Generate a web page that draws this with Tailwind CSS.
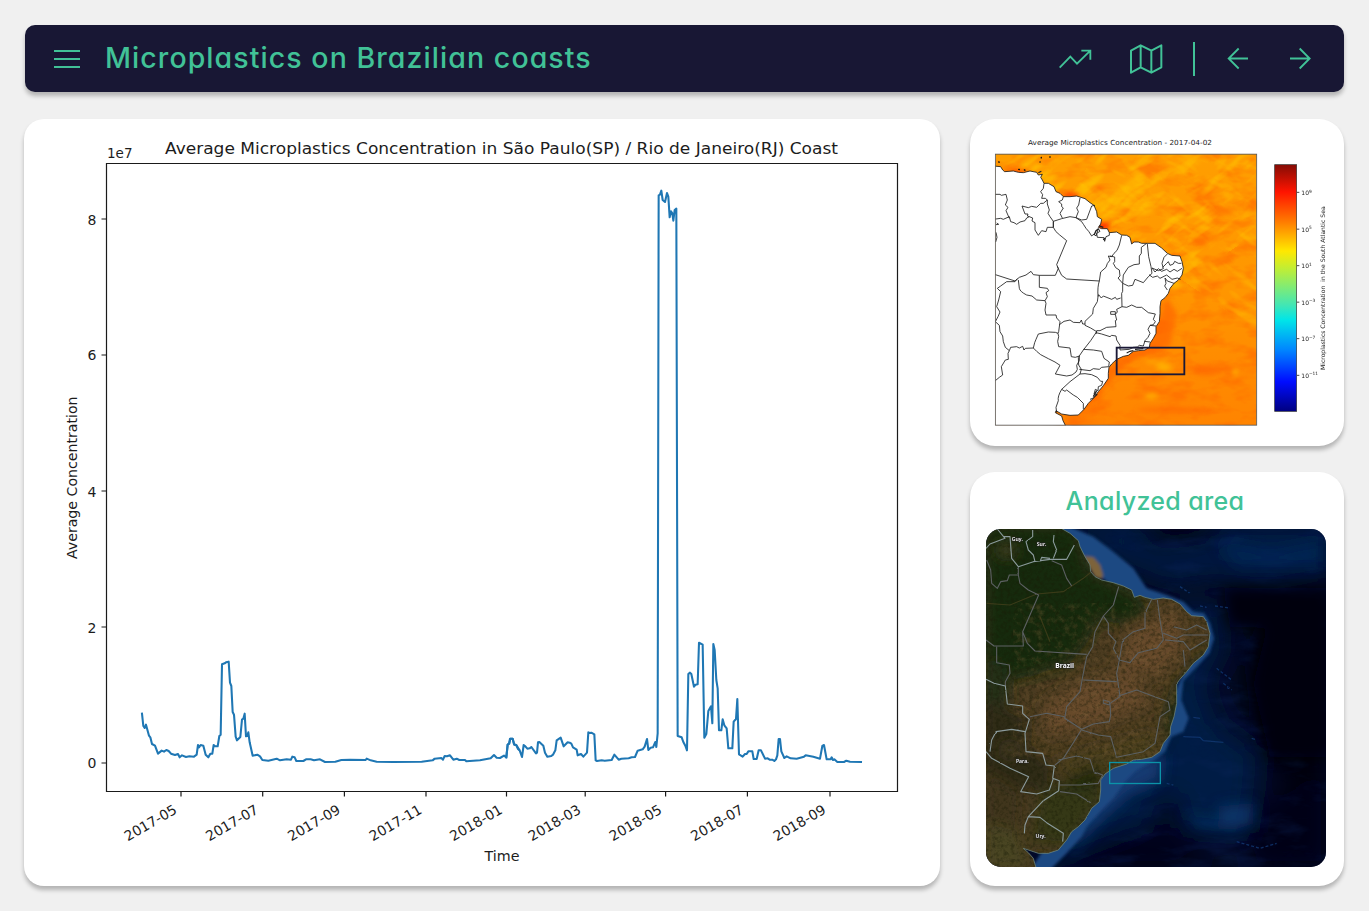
<!DOCTYPE html>
<html lang="en">
<head>
<meta charset="utf-8">
<title>Microplastics on Brazilian coasts</title>
<script src="https://cdn.jsdelivr.net/npm/@tailwindcss/browser@4"></script>
</head>
<body class="bg-[#f0f0f0] w-[1369px] h-[911px] overflow-hidden">
<div class="flex flex-col h-full pt-[25px] pl-6 pr-[25px] pb-[25px] gap-[27px]">
  <header class="ml-px h-[67px] shrink-0 rounded-[10px] bg-[#181734] shadow-[0_4px_4px_rgba(0,0,0,0.25)] flex items-center pl-[29px] pr-8 text-[#41c297]">
    <svg class="w-[26px] h-5 shrink-0" viewBox="0 0 26 20" fill="none" stroke="currentColor" stroke-width="2"><path d="M0 2H26M0 10H26M0 18H26"/></svg>
    <h1 class="ml-[25px] font-['Inter',sans-serif] font-medium text-[28.5px] leading-none tracking-[1.07px] whitespace-nowrap [font-feature-settings:'cv11','calt'_0]">Microplastics on Brazilian coasts</h1>
    <svg class="ml-auto w-[34px] h-[34px]" viewBox="84 66 102 102" fill="none" stroke="currentColor" stroke-width="5.500"><path d="M89 143L121 110L141 131L181 92M154 92H181V119"/></svg>
    <svg class="ml-[37px] w-[34px] h-[34px]" viewBox="297 66 102 102" fill="none" stroke="currentColor" stroke-width="6" stroke-linejoin="round"><path d="M303 92L332 76L364 92L394 76V142L364 158L332 142L303 158ZM332 76V142M364 92V158"/></svg>
    <div class="ml-[30px] w-0.5 h-[34px] bg-current"></div>
    <svg class="ml-8 w-[23px] h-[23px]" viewBox="591 82.500 69 69" fill="none" stroke="currentColor" stroke-width="5.500"><path d="M654 117H596M626 87L596 117L626 147"/></svg>
    <svg class="ml-[39px] w-[23px] h-[23px]" viewBox="777 82.500 69 69" fill="none" stroke="currentColor" stroke-width="5.500"><path d="M780 117H839M809 87L839 117L809 147"/></svg>
  </header>

  <main class="flex gap-[30px] flex-1 min-h-0">
    <section class="w-[916px] h-[767px] shrink-0 rounded-[20px] bg-white shadow-[0_4px_4px_rgba(0,0,0,0.25)]">
      <svg class="w-[916px] h-[767px] font-['DejaVu_Sans',sans-serif]" viewBox="24 119 916 767" fill="#1c1c1c">
        <text x="165" y="154" font-size="16.700" textLength="673" lengthAdjust="spacingAndGlyphs">Average Microplastics Concentration in São Paulo(SP) / Rio de Janeiro(RJ) Coast</text>
        <text x="107" y="158" font-size="13.800" textLength="25.500" lengthAdjust="spacingAndGlyphs">1e7</text>
        <g font-size="14" text-anchor="end">
          <text x="96.500" y="768">0</text><text x="96.500" y="632.500">2</text><text x="96.500" y="496.500">4</text><text x="96.500" y="360">6</text><text x="96.500" y="224.500">8</text>
        </g>
        <path d="M106.500 163.500H897.500V791.500H106.500ZM101.500 763H106.500M101.500 627H106.500M101.500 491H106.500M101.500 355H106.500M101.500 219H106.500M181 791.500V796.500M262.700 791.500V796.500M344.400 791.500V796.500M426 791.500V796.500M506.500 791.500V796.500M585.200 791.500V796.500M665.600 791.500V796.500M747.400 791.500V796.500M830 791.500V796.500" fill="none" stroke="#1a1a1a" stroke-width="1.200"/>
        <g font-size="13.900" text-anchor="end">
          <text transform="translate(178 812.500) rotate(-30)">2017-05</text>
          <text transform="translate(259.500 812.500) rotate(-30)">2017-07</text>
          <text transform="translate(341.500 812.500) rotate(-30)">2017-09</text>
          <text transform="translate(423 812.500) rotate(-30)">2017-11</text>
          <text transform="translate(503.500 812.500) rotate(-30)">2018-01</text>
          <text transform="translate(582 812.500) rotate(-30)">2018-03</text>
          <text transform="translate(663 812.500) rotate(-30)">2018-05</text>
          <text transform="translate(744.500 812.500) rotate(-30)">2018-07</text>
          <text transform="translate(827 812.500) rotate(-30)">2018-09</text>
        </g>
        <text x="502" y="861" font-size="13.900" text-anchor="middle" textLength="35" lengthAdjust="spacingAndGlyphs">Time</text>
        <text transform="translate(77 559) rotate(-90)" font-size="13.900" textLength="162.500" lengthAdjust="spacingAndGlyphs">Average Concentration</text>
        <g fill="none" stroke="#1f77b4" stroke-width="6.200" stroke-linejoin="round" stroke-linecap="square">
          <path transform="translate(100 640) scale(.33333)" d="M126 221L130 258L134 264L138 254L147 287L151 292L156 312L165 317L174 341L185 332L192 335L199 330L206 333L213 341L225 345L234 342L239 352L246 346L258 351L268 349L282 350L290 344L294 315L297 322L302 315L310 317L317 344L325 352L331 341L337 341L341 315L345 319L353 319L358 288L362 284L366 73L374 70L378 67L386 65L390 128L394 138L398 216L402 224L407 290L411 301L421 291L426 239L430 236L434 221L438 289L442 288L445 277L449 307L458 347L472 344L480 349L487 360L505 362L530 356L540 361L560 358L573 359L577 350L584 352L589 363L610 363L618 358L632 358L642 361L660 358L675 366L706 365L724 360L750 359L797 360L800 356L812 361L830 365L880 366L965 365L998 361L1004 356L1024 354L1029 359L1034 348L1041 349L1050 346L1060 359L1070 356L1078 360L1095 360L1099 364L1140 361L1172 355L1182 345L1190 353L1200 354L1212 347L1219 352L1223 314L1227 311L1230 296L1238 296L1242 313L1249 315L1257 328"/>
          <path transform="translate(480 640) scale(.33333)" d="M79 352L83 314L88 311L91 296L98 296L103 314L109 316L114 327L119 331L126 351L131 315L136 319L142 326L149 325L154 321L168 340L171 338L174 307L178 306L190 317L195 338L202 350L214 348L219 344L226 331L230 301L242 293L251 319L263 307L269 308L274 311L279 322L290 329L293 346L303 342L310 350L321 338L325 277L329 279L334 278L343 283L347 361L351 363L365 361L374 362L395 360L403 344L416 359L424 356L446 355L455 352L465 351L473 332L488 328L494 320L501 297L505 330L512 323L519 322L526 306L529 321L533 280L536 -1334L540 -1336L544 -1348L548 -1320L555 -1314L561 -1341L565 -1330L569 -1268L573 -1286L577 -1280L580 -1258L584 -1290L589 -1294L593 288L605 292L610 306L616 317L621 331L625 102L630 98L634 102L642 140L647 134L653 133L657 8L668 14L673 293L679 282L685 213L693 199L697 250L700 12L704 30L709 120L713 145L717 271L724 271L728 238L733 256L740 265L745 325L757 325L761 245L768 237L772 177L777 343L788 350L795 342L800 342L805 334L817 334L821 357L830 357L836 331L843 331L855 356L863 355L869 359L877 359L883 363L888 358L892 346L896 297L900 297L904 334L913 354L920 349L932 355L950 356L972 350L977 346L1000 350L1020 356L1027 318L1032 315L1040 358L1052 358L1055 352L1059 360L1063 358L1072 366L1092 366L1099 362L1110 365L1143 366"/>
        </g>
      </svg>
    </section>

    <div class="flex flex-col gap-[26px] w-[374px]">
      <section class="h-[327px] rounded-[25px] bg-white shadow-[0_4px_4px_rgba(0,0,0,0.25)]">
        <svg class="w-[374px] h-[327px] font-['DejaVu_Sans',sans-serif]" viewBox="0 -3 1122 981" fill="#1c1c1c">
          <defs>
            <clipPath id="frame"><rect x="76" y="102" width="784" height="814"/></clipPath>
            <linearGradient id="jet" x1="0" y1="0" x2="0" y2="1">
              <stop offset="0" stop-color="#850c05"/><stop offset=".11" stop-color="#ff1400"/><stop offset=".23" stop-color="#ff7a00"/><stop offset=".35" stop-color="#ffe800"/><stop offset=".42" stop-color="#c2ee33"/><stop offset=".5" stop-color="#7deb78"/><stop offset=".57" stop-color="#41e6b5"/><stop offset=".63" stop-color="#00e5e8"/><stop offset=".75" stop-color="#0086ff"/><stop offset=".88" stop-color="#000cff"/><stop offset="1" stop-color="#000080"/>
            </linearGradient>
            <linearGradient id="sea" x1="0" y1="0" x2="0" y2="1"><stop offset="0" stop-color="#ff9e00"/><stop offset=".5" stop-color="#ff9600"/><stop offset=".75" stop-color="#ff8c00"/><stop offset="1" stop-color="#ff8400"/></linearGradient>
            <filter id="streak" x="0" y="0" width="100%" height="100%" color-interpolation-filters="sRGB"><feTurbulence type="fractalNoise" baseFrequency=".010 .035" numOctaves="2" seed="4"/><feColorMatrix values="0 0 0 0 1  0 0 0 0 .86  0 0 0 0 0  4 0 0 0 -2.050"/></filter>
            <filter id="cross" x="0" y="0" width="100%" height="100%" color-interpolation-filters="sRGB"><feTurbulence type="fractalNoise" baseFrequency=".010 .035" numOctaves="2" seed="17"/><feColorMatrix values="0 0 0 0 1  0 0 0 0 .82  0 0 0 0 0  4 0 0 0 -2.100"/></filter>
            <filter id="warm" x="0" y="0" width="100%" height="100%" color-interpolation-filters="sRGB"><feTurbulence type="fractalNoise" baseFrequency=".012 .025" numOctaves="3" seed="11"/><feColorMatrix values="0 0 0 0 1  0 0 0 0 .4  0 0 0 0 0  0 3 0 0 -1.300"/></filter>
            <filter id="soft" x="-60%" y="-60%" width="220%" height="220%"><feGaussianBlur stdDeviation="8"/></filter>
          </defs>
          <text x="174" y="76" font-size="21" textLength="552" lengthAdjust="spacingAndGlyphs">Average Microplastics Concentration - 2017-04-02</text>
          <g clip-path="url(#frame)">
            <rect x="76" y="102" width="784" height="814" fill="url(#sea)"/>
            <rect x="76" y="102" width="784" height="814" filter="url(#warm)" opacity=".55"/>
            <g transform="rotate(-35 560 300)"><rect x="0" y="-200" width="1100" height="700" filter="url(#streak)" opacity=".42"/></g>
            <g transform="rotate(35 560 300)"><rect x="300" y="-200" width="700" height="600" filter="url(#cross)" opacity=".34"/></g>
            <g filter="url(#soft)">
              <g fill="#ff6600" opacity=".7"><ellipse cx="690" cy="362" rx="24" ry="14"/><ellipse cx="760" cy="272" rx="36" ry="10"/><ellipse cx="850" cy="255" rx="15" ry="20"/><path d="M590 530L620 580L600 680L540 695L480 720L420 780L350 870L280 895L400 905L300 915L290 870L400 750L530 680L565 600Z"/><ellipse cx="710" cy="750" rx="45" ry="16"/><ellipse cx="610" cy="870" rx="110" ry="8"/></g>
              <g fill="#ffc400" opacity=".8"><ellipse cx="617" cy="495" rx="16" ry="12"/><ellipse cx="582" cy="742" rx="24" ry="8"/><ellipse cx="560" cy="725" rx="34" ry="5"/><ellipse cx="545" cy="828" rx="22" ry="8"/><ellipse cx="796" cy="756" rx="7" ry="12"/><ellipse cx="630" cy="155" rx="20" ry="6"/></g>
              <g stroke="#ffd500" stroke-width="9" opacity=".7"><path d="M380 270L520 160M395 300L480 245M440 265L560 175M500 290L590 240"/></g>
              <g fill="#ff3000"><ellipse cx="400" cy="318" rx="20" ry="14"/><ellipse cx="150" cy="156" rx="30" ry="5"/><ellipse cx="305" cy="226" rx="24" ry="7"/></g>
            </g>
            <g stroke="#1a1a1a" stroke-width="2.500" fill="none" stroke-linejoin="round">
              <path fill="#fff" d="M70 138L92 140L98 150L104 155L130 153L145 157L160 158L180 153L200 157L205 165L217 163L212 172L217 180L222 190L235 190L252 200L258 215L270 220L280 230L300 230L320 228L345 236L360 248L372 256L380 275L382 290L395 298L392 312L385 322L395 326L412 326L418 338L440 336L455 345L470 346L480 352L485 372L492 366L505 366L515 370L530 370L555 370L575 384L592 400L605 406L630 408L636 425L640 445L636 465L625 480L612 490L600 505L595 520L585 533L573 542L570 560L570 580L568 605L558 620L558 640L550 655L540 670L538 682L525 690L505 692L490 694L475 706L460 709L440 718L425 732L417 742L415 760L415 775L400 797L385 815L370 835L355 850L342 868L325 885L300 886L275 882L258 872L256 878L275 888L279 902L287 918L70 922Z"/>
              <path d="M70 223H90L94 226L108 223L112 240L106 255L114 262L108 272L118 295M70 298L92 295L100 298L118 290L122 305L132 308L140 313L150 306L165 302L170 294L178 290L188 294L186 303L195 308V330L205 346L215 332L228 335L232 322H250L250 304M178 290L172 288L174 282L165 282L156 258L175 263L185 259L200 262L212 250L220 250L232 240L226 235L215 235L218 224L212 215L220 205L222 190M232 240V252L238 270L234 280L240 290L250 304L275 296L300 290L318 293L325 275L320 264L326 255L330 234M280 230L277 240L266 245L275 252V260L280 264L270 280L277 294M318 293L335 300L350 298L365 258L375 256M318 293L335 305L341 314L348 325L356 334L365 348L372 342L378 348L385 326M385 326L390 334L380 340L382 352L402 353L404 364L408 350L418 346V338M80 309L86 313L78 314M78 337L81 352L77 366"/>
              <path d="M250 304L250 322Q256 336 268 344L290 362L260 434L265 445L256 466H208L190 464L183 454L168 465L148 472L135 483L70 462M142 476L135 485L110 485L92 498L82 505L92 515L86 540L80 560L90 576L84 590L76 605L88 616L90 635L98 648L100 665L106 682L118 692L122 682L140 680L148 684L158 679L162 690L166 685L190 684M262 440L275 466L290 477L388 483M208 466V502L232 505L236 512L228 518L232 530L225 542L200 540L186 528L170 525Q150 515 148 505L145 480M225 542L228 550L225 570L228 585H258L260 594L270 605L266 635L264 640"/>
              <path d="M76 782L88 772L98 765L94 740L106 720L115 718L114 700L118 692M190 684Q194 665 198 658L205 642L235 636L256 637L264 640L266 650L263 664L266 680L300 684L304 710L316 712L328 708V722L320 736L322 748L318 756L306 765L290 768L256 762L270 736L255 726L235 716L212 704L200 694L190 684M326 735L334 748L330 762L300 785L275 808Q262 830 265 842L258 862L260 878M275 808L285 814L290 810L310 825L322 832L340 850V868M330 762L345 761L365 764L382 772L392 784L398 784L395 796L385 800L384 812L376 808L372 822L382 824L370 834L360 838"/>
              <path d="M455 346L448 375Q442 395 432 400L425 410L415 408L420 420Q410 430 408 442L392 456L388 483Q382 500 384 530L382 545L370 565L368 582L345 604V616L362 624L380 635L362 662L340 690L325 712L326 735M345 612L338 612L334 600L330 608L310 607L300 600L282 604L268 614M384 530L386 524L394 534L400 528L425 538L436 532L440 538L452 534M420 408L434 411V425L430 430L437 443L448 450L450 468L444 474L458 490V514L455 520L456 560L440 568L442 576L436 583L440 600L436 602L438 620L410 622L390 632H380L378 642M458 490L475 498L488 496L495 478L520 488L535 470L546 460L543 440L536 410L532 372M458 490L460 465L475 442L492 434L508 432V408L514 400V382L530 370M546 444L565 452L580 446L576 430L582 412L592 402M578 442L590 430L595 425L600 436L610 432L614 424L625 430H634M546 444L555 456L565 446L575 454L590 448L600 456L612 448L622 454L636 445M537 464L548 472L562 468L570 475L590 465L606 478L622 474L632 478M585 474L592 483L612 490M585 474L588 490L584 498L592 510"/>
              <path d="M456 560L470 562L485 555L500 562H515L535 578L556 582L550 598L556 605L550 614L540 616L534 628L540 640L534 652L525 662L520 678L508 676L502 681L490 682L478 688L450 690V676L440 660L438 648L425 646L420 650L395 642L378 638M540 616L558 618M523 664L540 666M340 688L370 690L395 694L402 715L418 726L416 740L395 742L388 748L370 746L360 752L328 748M422 575H436V583H422Z"/>
            </g>
            <path d="M214 112L210 126M240 110V113M86 126L98 129M146 148L150 149M163 150L168 151" stroke="#111" stroke-width="4" stroke-linecap="round" stroke-dasharray="2 12" fill="none"/>
            <path d="M372 346L378 332L386 326M388 318L400 322M400 360L404 354M370 830L380 812" stroke="#222" stroke-width="4" fill="none"/>
            <path d="M470 699L480 694L490 692M495 688L520 686M205 158L214 154" stroke="#222" stroke-width="3.500" fill="none"/>
          </g>
          <rect x="76" y="102.500" width="784" height="813" fill="none" stroke="#555" stroke-width="2.500"/>
          <rect x="440" y="683" width="203" height="80" fill="none" stroke="#1a1836" stroke-width="5.500"/>
          <rect x="914" y="134" width="66" height="740" fill="url(#jet)" stroke="#333" stroke-width="2"/>
          <path d="M981 217H988M981 327.500H988M981 437H988M981 546.500H988M981 656H988M981 766H988" stroke="#222" stroke-width="2.500"/>
          <g font-size="18">
            <text x="994" y="225">10<tspan dy="-7" font-size="13">9</tspan></text>
            <text x="994" y="335">10<tspan dy="-7" font-size="13">5</tspan></text>
            <text x="994" y="444">10<tspan dy="-7" font-size="13">1</tspan></text>
            <text x="994" y="554">10<tspan dy="-7" font-size="13">−3</tspan></text>
            <text x="994" y="663">10<tspan dy="-7" font-size="13">−7</tspan></text>
            <text x="994" y="773">10<tspan dy="-7" font-size="13">−11</tspan></text>
          </g>
          <text transform="translate(1065 750) rotate(-90)" font-size="18" textLength="491" lengthAdjust="spacingAndGlyphs" xml:space="preserve">Microplastics Concentration  in the South Atlantic Sea</text>
        </svg>
      </section>

      <section class="h-[414px] rounded-[25px] bg-white shadow-[0_4px_4px_rgba(0,0,0,0.25)] flex flex-col pt-4 pl-4">
        <h2 class="w-[338px] h-[41px] text-center font-['Inter',sans-serif] font-medium text-[25px] leading-[26px] tracking-[0.35px] text-[#41c297] whitespace-nowrap [font-feature-settings:'cv11']">Analyzed area</h2>
        <svg class="w-[340px] h-[338px] rounded-[15px] font-['Open_Sans',sans-serif]" viewBox="48 177 1020 1014">
          <defs>
            <filter id="b5" x="-30%" y="-30%" width="160%" height="160%"><feGaussianBlur stdDeviation="4"/></filter>
            <filter id="b20" x="-50%" y="-50%" width="200%" height="200%"><feGaussianBlur stdDeviation="20"/></filter>
            <filter id="b40" x="-50%" y="-50%" width="200%" height="200%"><feGaussianBlur stdDeviation="38"/></filter>
            <filter id="grain" x="0" y="0" width="100%" height="100%" color-interpolation-filters="sRGB"><feTurbulence type="fractalNoise" baseFrequency=".09" numOctaves="4" seed="8"/><feColorMatrix values="0 0 0 0 .1  0 0 0 0 .11  0 0 0 0 .03  3 0 0 0 -1.350"/></filter>
            <filter id="dust" x="0" y="0" width="100%" height="100%" color-interpolation-filters="sRGB"><feTurbulence type="fractalNoise" baseFrequency=".05" numOctaves="5" seed="21"/><feColorMatrix values="0 0 0 0 .52  0 0 0 0 .4  0 0 0 0 .24  0 3 0 0 -1.400"/></filter>
            <filter id="swell" x="0" y="0" width="100%" height="100%" color-interpolation-filters="sRGB"><feTurbulence type="fractalNoise" baseFrequency=".007 .02" numOctaves="5" seed="5"/><feColorMatrix values="0 0 0 0 .05  0 0 0 0 .15  0 0 0 0 .36  3 0 0 0 -1.450"/></filter>
            <filter id="wob" x="-5%" y="-5%" width="110%" height="110%"><feTurbulence type="fractalNoise" baseFrequency=".06" numOctaves="2" seed="3"/><feDisplacementMap in="SourceGraphic" scale="5" xChannelSelector="R" yChannelSelector="G"/></filter>
            <path id="coast" d="M265 170L300 190L325 212L330 230L345 260L360 285L362 305L375 320L395 330L430 338L460 348L485 360L493 382L510 376L525 382L550 388L580 384L605 388L630 402L650 425L665 437L700 440L710 455L720 490L715 530L700 555L670 580L650 605L628 630L620 642L620 700L612 740L602 770L600 795L580 820L570 845L545 862L515 868L490 870L470 882L430 895L405 912L392 930L392 960L388 995L365 1015L345 1050L325 1070L305 1085L290 1110L265 1140L235 1150L205 1150L160 1135L175 1148L190 1165L200 1200L40 1200L40 170Z"/>
            <clipPath id="land"><use href="#coast"/></clipPath>
          </defs>
          <rect x="48" y="177" width="1020" height="1014" fill="#020a25"/>
          <g filter="url(#b40)">
            <path d="M260 160H1080V290L900 325L720 310L600 330L450 270Z" fill="#061c45"/>
            <path d="M640 400L740 420L750 540L700 640L740 760L860 850L850 960L830 1090L700 1080L520 1060L330 1130L200 1200L350 960L560 820Z" fill="#051c44"/>
            <path d="M610 150L760 180L740 220L560 240L490 200ZM900 360L1000 380L1070 450V900L960 980L850 800L820 560Z" fill="#01020f"/>
            <path d="M330 1160L420 1090L620 1100L760 1200H330ZM540 1000L620 960L640 1080L560 1080ZM860 1000L1080 900V1200H820Z" fill="#020417"/>
          </g>
          <rect x="48" y="177" width="1020" height="1014" filter="url(#swell)" opacity=".3"/>
          <g filter="url(#b20)"><path d="M640 1030L700 1045L750 1055L745 1010L850 1000L850 1060L790 1080L690 1070Z" fill="#15407c" opacity=".65"/><path d="M740 210L900 240L1060 210V290L800 290Z" fill="#0a2a60" opacity=".5"/><path d="M760 355L1080 355V480L780 470ZM900 440H1080V860L900 860L850 640Z" fill="#01020f"/><path d="M450 880L580 850L570 930L480 970L380 1060L300 1150L340 1040Z" fill="#123a72"/></g>
          <g filter="url(#b5)">
            <path d="M255 170H300L370 200L430 245L490 295L530 355L590 375L640 395L670 425L702 430L720 460L732 505L718 550L676 595L640 632L634 690L656 745L640 785L604 800L585 845L545 875L495 905L465 935L430 985L390 1025L350 1070L335 1100L290 1150L240 1200H180L380 900L600 700L690 500L480 390L340 280Z" fill="#1b4882"/>
            <path d="M340 258L370 262L390 285L399 315L395 328L375 322L350 280Z" fill="#7d643b"/>
          </g>
          <g clip-path="url(#land)">
            <rect x="40" y="170" width="700" height="1030" fill="#4b3b20"/>
            <g filter="url(#b20)">
              <path d="M40 160H320L360 300L500 370L540 430L440 465L390 440L350 520L300 580L180 620L40 640Z" fill="#162a0d"/>
              <path d="M40 560L110 580L120 680L90 710H40ZM620 640L660 590L720 520L700 620L600 860L580 740Z" fill="#232f13"/>
              <path d="M40 700L110 710L170 740V830L250 890L240 960L150 960L40 900Z" fill="#2e2915"/>
              <path d="M210 960L390 910L400 990L300 1130L180 1120Z" fill="#353816"/>
              <path d="M40 900L160 970L150 1100L200 1200H40Z" fill="#40351c"/>
              <path d="M40 1060L140 1080L180 1200H40Z" fill="#4a4522"/>
              <path d="M250 870L560 780L560 870L400 920L300 920Z" fill="#4c411f"/>
              <path d="M280 930L390 880L395 940L300 960Z" fill="#1c2810"/>
              <path d="M480 480L620 420L640 540L560 620L440 590ZM330 640L480 600L540 700L400 760L230 800L220 700Z" fill="#664a2b"/>
              <ellipse cx="110" cy="240" rx="26" ry="18" fill="#4a4525"/><ellipse cx="120" cy="840" rx="26" ry="16" fill="#50422b"/>
            </g>
            <path d="M330 560L380 480L460 420L700 400L700 520L640 600L590 820L420 860L240 850L180 720L130 640Z" filter="url(#dust)" opacity=".3"/>
            <rect x="40" y="170" width="700" height="1030" filter="url(#grain)" opacity=".42"/>
            <path d="M50 400L120 405L200 372L280 365L340 325L365 305M210 440L240 515" stroke="#4a431f" stroke-width="3.500" fill="none" opacity=".7" filter="url(#wob)"/>
          </g>
          <g filter="url(#wob)" fill="none" stroke-linejoin="round">
            <use href="#coast" stroke="#6f8a85" stroke-width="2.200"/>
            <g stroke="#5c6062" stroke-width="3.300">
              <path d="M50 270L62 300L65 340L82 355L92 335L112 332L118 315H145V290M145 315L150 340L175 360L206 375L158 485L160 528H72L48 510M158 485L172 520L195 543L350 553M80 530V578L118 585L120 610L106 635V648M245 272L275 285L290 325L305 348M446 350L430 405L400 438L375 485L368 530L350 560L338 620L330 665L290 710L284 745L335 778L310 818L280 865L255 885M400 438L415 460V490L438 515L430 535L448 570L440 610L450 680L420 700L422 735L418 755L370 762L335 778"/>
              <path d="M448 570L480 578L505 548L560 535L580 510L570 450L562 390M448 570L458 510L490 485L525 475V430L545 388M580 490L620 505L640 495L715 495M585 510L640 515L660 540L710 510M610 470L650 480L680 465L710 480M640 540L645 590M340 630L380 632L440 635M445 678L500 660L540 675L595 695L600 720L570 740L555 820L520 845L440 862L422 800L385 795L335 780M180 740L230 730L284 740M400 690L418 695V705L400 700ZM265 870L320 858L360 868L372 905L398 915L385 940L330 945L270 945M270 965L320 972L362 998"/>
            </g>
            <g stroke="#8b9a9c" stroke-width="3.300">
              <path d="M48 235L60 222L105 205L82 177M100 200L120 200L125 265L145 290L190 275L240 268L290 268L313 225M188 180V200L168 215L175 240L190 255L195 275M252 195L250 215L260 240L250 265M210 275L215 262L240 265"/>
              <path d="M48 628L72 640L106 648L112 702L158 708V730L178 748L165 790L168 845L218 850L228 885L253 888L248 925L268 932L266 962L220 992L175 1040L165 1065L163 1090M48 845L65 865L120 895L176 920L152 965L200 972L238 960L250 925M60 845L65 810L78 785L125 778L165 785M175 1040L210 1042L230 1058L280 1090L278 1115"/>
            </g>
          </g>
          <g filter="url(#wob)" stroke="#133a75" fill="none" stroke-width="4" opacity=".75"><path d="M640 800L690 802L700 812L760 817M845 805L855 808M670 742L690 745"/><path stroke-dasharray="9 6" d="M630 350L660 370M690 408L710 412M735 408L780 414M590 940L610 945M740 595L785 630M760 640L785 660M800 1115L870 1135L920 1120"/></g>
          <rect x="419" y="877.500" width="152" height="63" fill="none" stroke="#0b93a8" stroke-width="4"/>
          <g fill="#fff" font-weight="600" text-anchor="middle" font-size="15.500" stroke="#222" stroke-width="3" paint-order="stroke">
            <text x="142" y="213">Guy.</text><text x="215" y="227">Sur.</text><text x="157" y="878">Para.</text><text x="212" y="1105">Ury.</text>
            <text x="284" y="594" font-size="20" font-weight="700">Brazil</text>
          </g>
        </svg>
      </section>
    </div>
  </main>
</div>
</body>
</html>
